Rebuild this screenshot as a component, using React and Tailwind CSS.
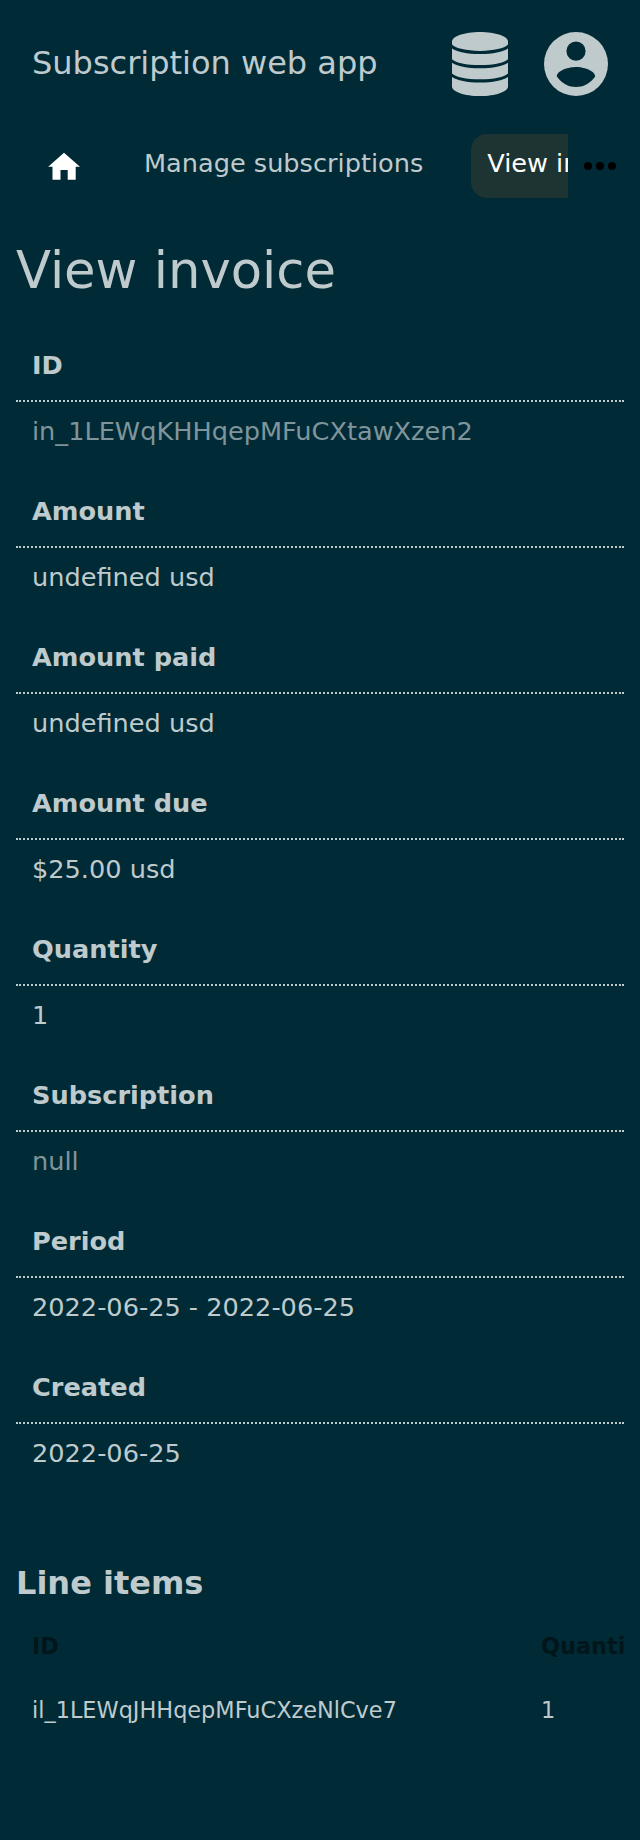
import React from "react";

const fields = [
  ["ID", "in_1LEWqKHHqepMFuCXtawXzen2", true],
  ["Amount", "undefined usd"],
  ["Amount paid", "undefined usd"],
  ["Amount due", "$25.00 usd"],
  ["Quantity", "1"],
  ["Subscription", "null", true],
  ["Period", "2022-06-25 - 2022-06-25"],
  ["Created", "2022-06-25"],
];

function DatabaseIcon() {
  return (
    <svg className="h-16 w-14" viewBox="0 0 56 64" fill="currentColor">
      <path d="M28 0C43.500 0 56 4.300 56 9.600v3C52 16.500 42 18.900 28 18.900S4 16.500 0 12.600V9.600C0 4.300 12.500 0 28 0z" />
      <path d="M0 16.500C5 20 15 22 28 22s23-2 28-5.500V27.200C52 30.800 42 33 28 33S4 30.800 0 27.200z" />
      <path d="M0 30.700c5 3.500 15 5.500 28 5.500s23-2 28-5.500v10.700c-4 3.600-14 5.800-28 5.800S4 45 0 41.400z" />
      <path d="M0 45c5 3.500 15 5.500 28 5.500S51 48.500 56 45v9.400C56 59.700 43.500 64 28 64S0 59.700 0 54.400z" />
    </svg>
  );
}

function AccountIcon() {
  return (
    <svg className="size-16" viewBox="0 0 64 64" fill="currentColor">
      <path fillRule="evenodd" d="M32 0a32 32 0 1 1 0 64a32 32 0 1 1 0-64zM32 9.500a9.600 9.600 0 1 0 0 19.200a9.600 9.600 0 1 0 0-19.200zM12.800 44.500C18 52 25 55 32 55s14-3 19.200-10.500C51 38 38.500 34.900 32 34.900S13 38 12.800 44.500z" />
    </svg>
  );
}

export default function App() {
  return (
    <div className="h-[1840px] w-[640px] overflow-hidden bg-[#002b36] font-['DejaVu_Sans',sans-serif] text-[#bfcacd]">
      <header className="flex h-32 items-center justify-between px-8">
        <div className="pb-0.5 text-[32px] leading-[48px]">Subscription web app</div>
        <div className="flex items-center gap-9">
          <DatabaseIcon />
          <AccountIcon />
        </div>
      </header>
      <nav className="flex h-[76px] items-start pt-[6px]">
        <div className="flex w-[568px] overflow-hidden whitespace-nowrap pl-8 text-[25.6px]">
          <svg className="size-16 shrink-0 text-white" viewBox="0 0 64 64" fill="currentColor"><path d="M32 18.700L48 32.800h-4.300v13h-8V36h-7.200v9.800h-8v-13h-4.300z" /></svg>
          <div className="ml-4 h-16 shrink-0 px-8 leading-[58px]">Manage subscriptions</div>
          <div className="ml-4 h-16 shrink-0 rounded-2xl bg-[#1e3433] px-4 leading-[58px] text-white">View invoice</div>
        </div>
        <svg className="ml-4 mt-4 h-8 w-8" viewBox="0 0 32 32"><circle cx="4" cy="16" r="4" /><circle cx="16" cy="16" r="4" /><circle cx="28" cy="16" r="4" /></svg>
      </nav>
      <main className="px-4">
        <h1 className="mt-8 h-[94px] text-[51.2px] leading-[68px]">View invoice</h1>
        <dl>
          {fields.map(([label, value, muted]) => (
            <div key={label} className="h-[146px]">
              <dt className="h-[72px] border-b-2 border-dotted border-[#bfcacd] px-4 text-[25.6px] font-bold leading-[70px]">{label}</dt>
              <dd className={muted ? "px-4 text-[25.6px] leading-[58px] text-[#80959b]" : "px-4 text-[25.6px] leading-[58px]"}>{value}</dd>
            </div>
          ))}
        </dl>
        <h2 className="mt-[53px] text-[32px] font-bold leading-[64px]">Line items</h2>
        <div className="overflow-hidden">
          <table className="w-[800px] table-fixed text-left text-[22.4px]">
            <thead><tr className="h-16 text-[#00161b]"><th className="w-[509px] px-4">ID</th><th className="px-4">Quantity</th></tr></thead>
            <tbody><tr className="h-16"><td className="px-4">il_1LEWqJHHqepMFuCXzeNlCve7</td><td className="px-4">1</td></tr></tbody>
          </table>
        </div>
      </main>
    </div>
  );
}
